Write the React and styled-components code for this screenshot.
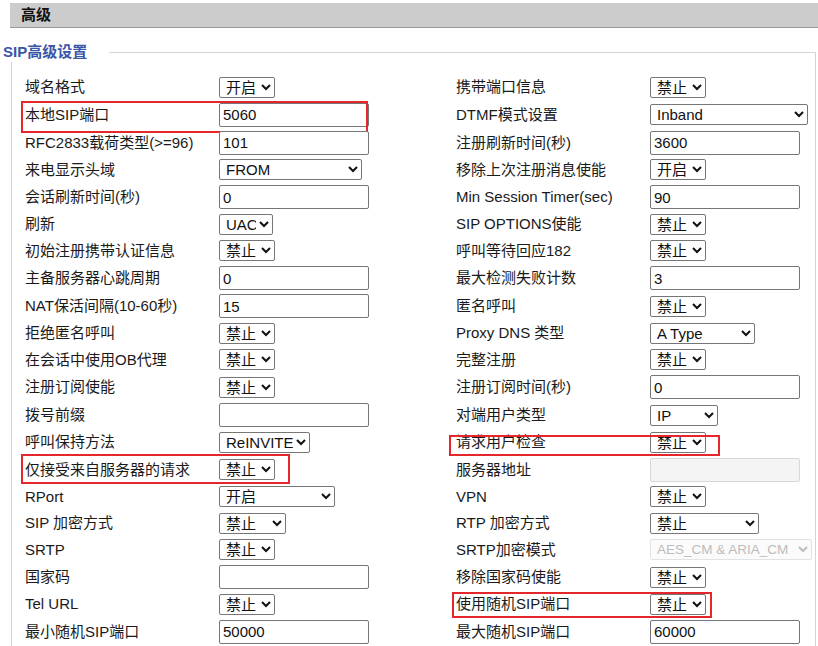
import React from "react";
import styled, { createGlobalStyle, css } from "styled-components";

const GlobalStyle = createGlobalStyle`
  html, body {
    margin: 0;
    padding: 0;
    background: #ffffff;
  }
  body {
    width: 818px;
    font-family: "Liberation Sans", "Noto Sans CJK SC", sans-serif;
    font-size: 15px;
    color: #1a1a1a;
  }
`;

const S = (value, width, extra = {}) => ({ type: "select", value, width, ...extra });
const I = (value = "", extra = {}) => ({ type: "input", value, ...extra });

// 左右两列的字段
const rows = [
  [{ label: "域名格式", ...S("开启", 56) }, { label: "携带端口信息", ...S("禁止", 56) }],
  [
    { label: "本地SIP端口", ...I("5060"), hl: { l: -4, t: 0.75, w: 347, h: 32 } },
    { label: "DTMF模式设置", ...S("Inband", 158) },
  ],
  [{ label: "RFC2833载荷类型(>=96)", ...I("101") }, { label: "注册刷新时间(秒)", ...I("3600") }],
  [{ label: "来电显示头域", ...S("FROM", 143) }, { label: "移除上次注册消息使能", ...S("开启", 56) }],
  [{ label: "会话刷新时间(秒)", ...I("0") }, { label: "Min Session Timer(sec)", ...I("90") }],
  [{ label: "刷新", ...S("UAC", 54) }, { label: "SIP OPTIONS使能", ...S("禁止", 56) }],
  [{ label: "初始注册携带认证信息", ...S("禁止", 56) }, { label: "呼叫等待回应182", ...S("禁止", 56) }],
  [{ label: "主备服务器心跳周期", ...I("0") }, { label: "最大检测失败计数", ...I("3") }],
  [{ label: "NAT保活间隔(10-60秒)", ...I("15") }, { label: "匿名呼叫", ...S("禁止", 56) }],
  [{ label: "拒绝匿名呼叫", ...S("禁止", 56) }, { label: "Proxy DNS 类型", ...S("A Type", 105) }],
  [{ label: "在会话中使用OB代理", ...S("禁止", 56) }, { label: "完整注册", ...S("禁止", 56) }],
  [{ label: "注册订阅使能", ...S("禁止", 56) }, { label: "注册订阅时间(秒)", ...I("0") }],
  [{ label: "拨号前缀", ...I("") }, { label: "对端用户类型", ...S("IP", 68) }],
  [
    { label: "呼叫保持方法", ...S("ReINVITE", 91) },
    { label: "请求用户检查", ...S("禁止", 56), hl: { l: -7, t: 6, w: 271, h: 21 } },
  ],
  [
    { label: "仅接受来自服务器的请求", ...S("禁止", 56), hl: { l: -4, t: -2, w: 269, h: 30 } },
    { label: "服务器地址", ...I("", { disabled: true }) },
  ],
  [{ label: "RPort", ...S("开启", 116) }, { label: "VPN", ...S("禁止", 56) }],
  [{ label: "SIP 加密方式", ...S("禁止", 67) }, { label: "RTP 加密方式", ...S("禁止", 109) }],
  [
    { label: "SRTP", ...S("禁止", 56) },
    { label: "SRTP加密模式", ...S("AES_CM & ARIA_CM", 162, { disabled: true, small: true }) },
  ],
  [{ label: "国家码", ...I("") }, { label: "移除国家码使能", ...S("禁止", 56) }],
  [
    { label: "Tel URL", ...S("禁止", 56) },
    { label: "使用随机SIP端口", ...S("禁止", 56), hl: { l: -4, t: 1, w: 260, h: 26 } },
  ],
  [{ label: "最小随机SIP端口", ...I("50000") }, { label: "最大随机SIP端口", ...I("60000") }],
];

const App = () => {
  return (
    <>
      <GlobalStyle />
      <Page>
        <TitleBar>高级</TitleBar>
        <Fieldset>
          <Legend>SIP高级设置</Legend>
          {rows.map((row, i) => (
            <Row key={i} tall={row.some((f) => f.type === "input")}>
              {row.map((f) => (
                <Field key={f.label}>
                  <Label>{f.label}</Label>
                  {f.type === "select" ? (
                    <Select
                      width={f.width}
                      small={f.small}
                      disabled={f.disabled}
                      defaultValue={f.value}
                    >
                      <option>{f.value}</option>
                    </Select>
                  ) : (
                    <TextInput
                      type="text"
                      defaultValue={f.value}
                      disabled={f.disabled}
                    />
                  )}
                  {f.hl && (
                    <Highlight
                      style={{
                        left: f.hl.l,
                        top: f.hl.t,
                        width: f.hl.w,
                        height: f.hl.h,
                      }}
                    />
                  )}
                </Field>
              ))}
            </Row>
          ))}
        </Fieldset>
      </Page>
    </>
  );
};

export default App;

const Page = styled.div`
  width: 818px;
  padding-top: 3px;
`;

const TitleBar = styled.div`
  margin-left: 10px;
  height: 24px;
  line-height: 24px;
  background: #cccccc;
  border-bottom: 1px solid #9a9a9a;
  padding-left: 11px;
  font-weight: 700;
  font-size: 15px;
  color: #111;
`;

const Fieldset = styled.div`
  position: relative;
  margin: 24px 0 0 11px;
  width: 805px;
  border: 1px solid #d4d4d4;
  border-bottom: none;
  padding: 21px 0 20px 13px;
  box-sizing: border-box;
`;

const Legend = styled.div`
  position: absolute;
  left: -9px;
  top: -11px;
  height: 20px;
  line-height: 20px;
  padding-right: 22px;
  background: #ffffff;
  color: #3a56a8;
  font-weight: 700;
  font-size: 15px;
`;

const Row = styled.div`
  display: grid;
  grid-template-columns: 431px 1fr;
  height: ${(props) => (props.tall ? "28px" : "26.5px")};
`;

const Field = styled.div`
  position: relative;
  display: grid;
  grid-template-columns: 194px 1fr;
  align-items: center;
`;

const Label = styled.span`
  white-space: nowrap;
  line-height: 18px;
`;

const controlBase = css`
  box-sizing: border-box;
  font-family: "Liberation Sans", "Noto Sans CJK SC", sans-serif;
  font-size: 15px;
  color: #111;
  border: 1px solid #767676;
  border-radius: 2px;
  background: #fff;
  margin: 0;
`;

const Select = styled.select`
  ${controlBase};
  width: ${(props) => props.width}px;
  height: 21px;
  padding: 0 0 0 2px;
  ${(props) =>
    props.small &&
    css`
      font-size: 13.5px;
    `}
  &:disabled {
    color: #a0a0a0;
    border-color: #d6d6d6;
    background: #fafafa;
  }
`;

const TextInput = styled.input`
  ${controlBase};
  width: 150px;
  height: 24px;
  padding: 0 3px;
  &:disabled {
    background: #f4f4f4;
    border-color: #d8d8d8;
  }
`;

const Highlight = styled.span`
  position: absolute;
  box-sizing: border-box;
  border: 2px solid #e5262b;
  pointer-events: none;
`;
